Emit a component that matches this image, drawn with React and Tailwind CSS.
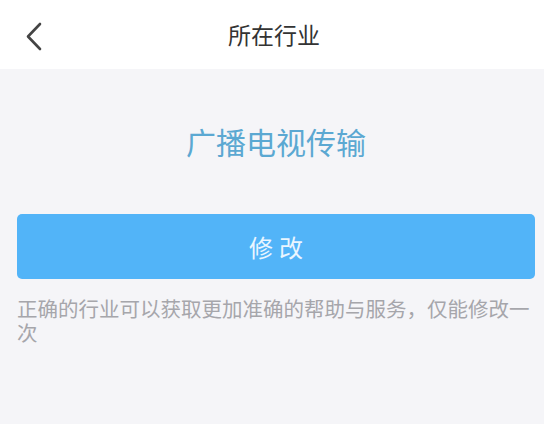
export default function App() {
  return (
    <div
      className="w-[544px] h-[424px] bg-[#f5f5f8] flex flex-col"
      style={{ fontFamily: '"Noto Sans CJK SC", "Noto Sans", sans-serif' }}
    >
      {/* header */}
      <div className="h-[69px] bg-white flex items-center relative shrink-0">
        <div className="absolute left-[24px] top-[22px]">
          <svg width="20" height="30" viewBox="0 0 20 30" fill="none">
            <path d="M16 2 L4 14.5 L16 27" stroke="#444" strokeWidth="2.6" strokeLinecap="round" strokeLinejoin="round" />
          </svg>
        </div>
        <h1 className="w-full text-center text-[23px] leading-none text-[#333] pl-[4px]">所在行业</h1>
      </div>

      <div className="px-[17px] pr-[9px]">
        <div className="mt-[57px] text-center text-[30px] leading-[30px] text-[#5ba8d2]">广播电视传输</div>

        <button className="mt-[58px] w-full h-[65px] rounded-[5px] bg-[#52b4f8] text-[#eaf6ff] text-[24px] tracking-[6px] pl-[6px] flex items-center justify-center">
          修改
        </button>

        <p className="mt-[17px] text-[20.5px] leading-[24px] text-[#a6a6ab]">
          正确的行业可以获取更加准确的帮助与服务，仅能修改一次
        </p>
      </div>
    </div>
  );
}
